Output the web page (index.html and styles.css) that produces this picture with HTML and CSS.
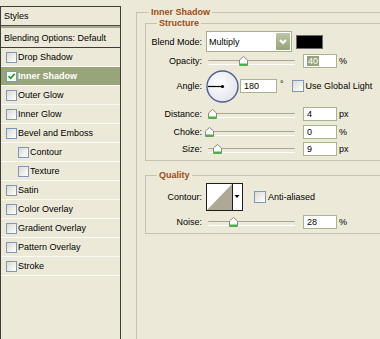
FILE: index.html
```html
<!DOCTYPE html>
<html lang="en">
<head>
    <meta charset="UTF-8">
    <title>Layer Style - Inner Shadow</title>
    <link rel="stylesheet" href="styles.css">
</head>
<body>
    <div class="dialog">
        <div class="styles-list">
            <div class="list-head">Styles</div>
            <div class="list-blend">Blending Options: Default</div>
            <div class="list-row"><span class="cb"></span>Drop Shadow</div>
            <div class="list-row active">
                <span class="cb checked">
                    <svg width="9" height="9" viewBox="0 0 9 9"><path d="M1.5 4.2 L3.6 6.3 L7.6 1.8" fill="none" stroke="#21a121" stroke-width="1.8"/></svg>
                </span>Inner Shadow
            </div>
            <div class="list-row"><span class="cb"></span>Outer Glow</div>
            <div class="list-row"><span class="cb"></span>Inner Glow</div>
            <div class="list-row"><span class="cb"></span>Bevel and Emboss</div>
            <div class="list-row sub"><span class="cb"></span>Contour</div>
            <div class="list-row sub"><span class="cb"></span>Texture</div>
            <div class="list-row"><span class="cb"></span>Satin</div>
            <div class="list-row"><span class="cb"></span>Color Overlay</div>
            <div class="list-row"><span class="cb"></span>Gradient Overlay</div>
            <div class="list-row"><span class="cb"></span>Pattern Overlay</div>
            <div class="list-row"><span class="cb"></span>Stroke</div>
        </div>

        <div class="settings">
            <fieldset class="group outer">
                <legend>Inner Shadow</legend>

                <fieldset class="group inner structure">
                    <legend>Structure</legend>
                    <div class="row blend-row">
                        <span class="lbl">Blend Mode:</span>
                        <div class="select">
                            <span>Multiply</span>
                            <span class="drop-btn">
                                <svg width="14" height="17" viewBox="0 0 14 17"><path d="M4 7 L7 10 L10 7" fill="none" stroke="#fff" stroke-width="2"/></svg>
                            </span>
                        </div>
                        <span class="swatch"></span>
                    </div>
                    <div class="row">
                        <span class="lbl">Opacity:</span>
                        <div class="slider">
                            <svg class="thumb" style="left:31px" width="9" height="10" viewBox="0 0 9 10"><path d="M0.5 4 L4.5 0.5 L8.5 4 L8.5 9.5 L0.5 9.5 Z" fill="#fff" stroke="#8b8a7e"/><path d="M1 8.5 H8" stroke="#3db83d" stroke-width="2"/></svg>
                        </div>
                        <span class="num"><span class="sel">40</span></span>
                        <span class="unit">%</span>
                    </div>
                    <div class="row angle-row">
                        <span class="lbl">Angle:</span>
                        <svg class="dial" width="33" height="33" viewBox="0 0 33 33">
                            <defs>
                                <radialGradient id="dialFill" cx="0.4" cy="0.4" r="0.7">
                                    <stop offset="0" stop-color="#ffffff"/>
                                    <stop offset="1" stop-color="#dfe2ea"/>
                                </radialGradient>
                            </defs>
                            <circle cx="16.5" cy="16.5" r="15.5" fill="url(#dialFill)" stroke="#4f5f8e" stroke-width="1.4"/>
                            <line x1="16.5" y1="16.5" x2="2" y2="16.5" stroke="#000" stroke-width="1.2"/>
                            <circle cx="16.5" cy="16.5" r="1.6" fill="#000"/>
                        </svg>
                        <span class="num angle">180</span>
                        <span class="deg">°</span>
                        <span class="cb box"></span>
                        <span class="cb-text">Use Global Light</span>
                    </div>
                    <div class="row spaced">
                        <span class="lbl">Distance:</span>
                        <div class="slider">
                            <svg class="thumb" style="left:0px" width="9" height="10" viewBox="0 0 9 10"><path d="M0.5 4 L4.5 0.5 L8.5 4 L8.5 9.5 L0.5 9.5 Z" fill="#fff" stroke="#8b8a7e"/><path d="M1 8.5 H8" stroke="#3db83d" stroke-width="2"/></svg>
                        </div>
                        <span class="num">4</span>
                        <span class="unit">px</span>
                    </div>
                    <div class="row choke-row">
                        <span class="lbl">Choke:</span>
                        <div class="slider">
                            <svg class="thumb" style="left:-3px" width="9" height="10" viewBox="0 0 9 10"><path d="M0.5 4 L4.5 0.5 L8.5 4 L8.5 9.5 L0.5 9.5 Z" fill="#fff" stroke="#8b8a7e"/><path d="M1 8.5 H8" stroke="#3db83d" stroke-width="2"/></svg>
                        </div>
                        <span class="num">0</span>
                        <span class="unit">%</span>
                    </div>
                    <div class="row size-row">
                        <span class="lbl">Size:</span>
                        <div class="slider">
                            <svg class="thumb" style="left:5px" width="9" height="10" viewBox="0 0 9 10"><path d="M0.5 4 L4.5 0.5 L8.5 4 L8.5 9.5 L0.5 9.5 Z" fill="#fff" stroke="#8b8a7e"/><path d="M1 8.5 H8" stroke="#3db83d" stroke-width="2"/></svg>
                        </div>
                        <span class="num">9</span>
                        <span class="unit">px</span>
                    </div>
                </fieldset>

                <fieldset class="group inner quality">
                    <legend>Quality</legend>
                    <div class="row contour-row">
                        <span class="lbl">Contour:</span>
                        <div class="contour">
                            <svg class="curve" width="25" height="26" viewBox="0 0 25 26"><rect width="25" height="26" fill="#fff"/><path d="M0 26 L25 0 L25 26 Z" fill="#ada897"/></svg>
                            <span class="contour-arrow">
                                <svg width="8" height="26" viewBox="0 0 8 26"><path d="M1.5 11 L6.5 11 L4 14 Z" fill="#000"/></svg>
                            </span>
                        </div>
                        <span class="cb box aa"></span>
                        <span class="cb-text">Anti-aliased</span>
                    </div>
                    <div class="row noise-row">
                        <span class="lbl">Noise:</span>
                        <div class="slider">
                            <svg class="thumb" style="left:21px" width="9" height="10" viewBox="0 0 9 10"><path d="M0.5 4 L4.5 0.5 L8.5 4 L8.5 9.5 L0.5 9.5 Z" fill="#fff" stroke="#8b8a7e"/><path d="M1 8.5 H8" stroke="#3db83d" stroke-width="2"/></svg>
                        </div>
                        <span class="num">28</span>
                        <span class="unit">%</span>
                    </div>
                </fieldset>
            </fieldset>
        </div>
    </div>
</body>
</html>
```

FILE: styles.css
```css
* {
    box-sizing: border-box;
}
html, body {
    margin: 0;
    height: 100%;
    overflow: hidden;
}
body {
    background: #ece9d8;
    font: 9px "Liberation Sans", Arial, sans-serif;
    color: #000;
}
.dialog {
    display: flex;
    height: 339px;
}

/* left: list of styles */
.styles-list {
    width: 121px;
    height: 400px;
    flex: none;
    margin-top: 6px;
    border: 1px solid #3d3d3d;
    border-bottom: 0;
}
.list-head {
    height: 19px;
    line-height: 18px;
    padding-left: 3px;
    border-bottom: 1px solid #4b4b4b;
}
.list-blend {
    height: 22px;
    display: flex;
    align-items: center;
    padding-left: 3px;
    border-top: 2px solid #a9a695;
    border-bottom: 1px solid #3d3d3d;
}
.list-row {
    height: 19px;
    display: flex;
    align-items: center;
    border-bottom: 1px solid #fbfaf5;
}
.list-row.active {
    background: #98a57b;
    color: #fff;
    font-weight: bold;
}
.cb {
    width: 11px;
    height: 11px;
    flex: none;
    margin: 0 1px 0 5px;
    border: 1px solid #7c99bd;
    background: linear-gradient(135deg, #dcdad0, #ffffff);
}
.cb.checked {
    background: #fff;
    display: flex;
    align-items: center;
    justify-content: center;
}
.sub .cb {
    margin-left: 17px;
}

/* right: settings */
.settings {
    flex: 1;
    padding-left: 15px;
}
.group {
    margin: 0;
    min-width: 0;
    border: 1px solid #c6c3b2;
}
.group > legend {
    padding: 0 2px;
    line-height: 11px;
    font-weight: bold;
    color: #9c4d16;
}
.outer {
    width: 300px;
    height: 400px;
    margin-top: 7px;
    padding: 0 8px;
}
.outer > legend {
    margin-left: 4px;
}
.inner {
    padding: 2px 0 4px 0;
}
.inner > legend {
    margin-left: 11px;
}
.quality {
    margin-top: 9px;
}

.row {
    display: flex;
    align-items: center;
    height: 14px;
    margin-top: 2px;
}
.blend-row {
    height: 21px;
    margin-top: 0;
}
.angle-row {
    height: 32px;
}
.spaced {
    margin-top: 5px;
}
.choke-row {
    margin-top: 4px;
}
.size-row {
    margin-top: 3px;
}
.contour-row {
    height: 28px;
    margin-top: 0;
}
.noise-row {
    margin-top: 4px;
}
.lbl {
    width: 56px;
    flex: none;
    margin-right: 4px;
    text-align: right;
}

.select {
    width: 86px;
    height: 21px;
    display: flex;
    align-items: center;
    padding-left: 2px;
    border: 1px solid #a3b18a;
    background: #fff;
}
.drop-btn {
    width: 14px;
    height: 17px;
    margin-left: auto;
    margin-right: 1px;
    background: linear-gradient(#bcc6a3, #96a479);
    border-radius: 1px;
}
.drop-btn svg {
    display: block;
}
.swatch {
    width: 27px;
    height: 14px;
    margin-left: 4px;
    background: #000;
    border: 1px solid #6b6b6b;
}

.slider {
    position: relative;
    width: 87px;
    height: 14px;
    margin-left: 2px;
}
.slider::before {
    content: "";
    position: absolute;
    left: 0;
    right: 0;
    top: 6px;
    height: 3px;
    border-top: 1px solid #a8a594;
    border-bottom: 1px solid #fff;
    border-radius: 1px;
}
.thumb {
    position: absolute;
    top: 2px;
}
.num {
    width: 34px;
    height: 14px;
    margin-left: 8px;
    padding-left: 3px;
    line-height: 12px;
    border: 1px solid #a7b58f;
    background: #fff;
}
.num .sel {
    background: #97a47a;
    color: #fff;
    padding: 0 1px;
}
.unit {
    margin-left: 2px;
}

.dial {
    display: block;
}
.num.angle {
    width: 37px;
    margin-left: 1px;
}
.deg {
    margin-left: 3px;
    align-self: flex-start;
    margin-top: 9px;
}
.cb.box {
    width: 12px;
    height: 12px;
    margin: 0 2px 0 8px;
}
.cb.aa {
    margin-left: 11px;
}

.contour {
    width: 37px;
    height: 28px;
    display: flex;
    border: 1px solid #1e1e1e;
}
.curve {
    display: block;
}
.contour-arrow {
    width: 10px;
    border-left: 1px solid #1e1e1e;
    background: #fff;
}
.contour-arrow svg {
    display: block;
}
```
